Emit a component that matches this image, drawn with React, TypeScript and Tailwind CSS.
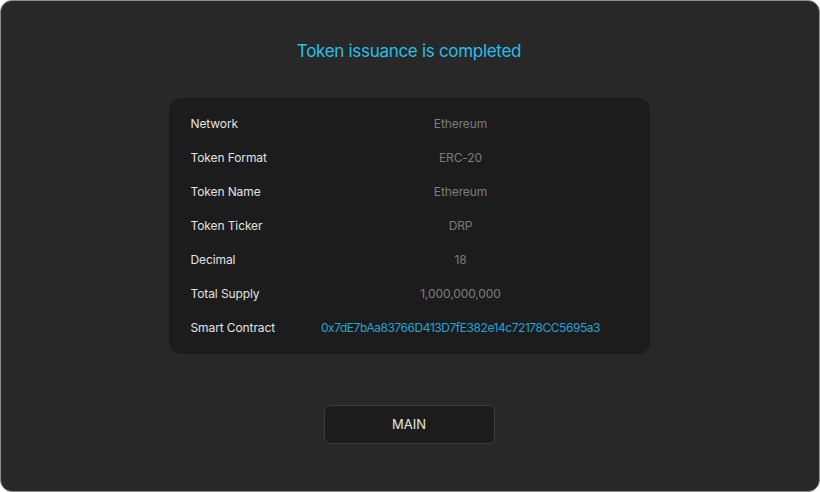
const rows: { label: string; value: string; link?: boolean }[] = [
  { label: "Network", value: "Ethereum" },
  { label: "Token Format", value: "ERC-20" },
  { label: "Token Name", value: "Ethereum" },
  { label: "Token Ticker", value: "DRP" },
  { label: "Decimal", value: "18" },
  { label: "Total Supply", value: "1,000,000,000" },
  { label: "Smart Contract", value: "0x7dE7bAa83766D413D7fE382e14c72178CC5695a3", link: true },
];

export default function App() {
  return (
    <div className="w-[820px] h-[492px] bg-white" style={{ fontFamily: "Inter, 'Noto Sans', sans-serif" }}>
      <div className="h-full flex flex-col items-center pr-[2px] rounded-[12px] border border-[#8c8c8c] bg-[#282828]">
        {/* Title */}
        <h1 className="mt-[38px] text-[17px] leading-[24px] text-[#2bbfe9] tracking-[-0.3px]">
          Token issuance is completed
        </h1>

        {/* Details */}
        <div className="mt-[35px] w-[481px] rounded-[12px] bg-[#1c1c1c] pl-[22px] pr-[40px] py-[9px]">
          {rows.map((r) => (
            <div key={r.label} className="flex items-center h-[34px] text-[12px] tracking-[-0.1px]">
              <div className="w-[121px] text-[#e2e2e2]">{r.label}</div>
              <div
                className={
                  "flex-1 text-center whitespace-nowrap " +
                  (r.link ? "text-[#21a3d3] tracking-[-0.45px]" : "text-[#7c7c7c]")
                }
              >
                {r.value}
              </div>
            </div>
          ))}
        </div>

        {/* Button */}
        <button className="mt-[51px] w-[171px] h-[39px] rounded-[6px] border border-[#3c3c3c] bg-[#1c1c1c] text-[13px] text-[#e6e6e6]">
          MAIN
        </button>
      </div>
    </div>
  );
}
